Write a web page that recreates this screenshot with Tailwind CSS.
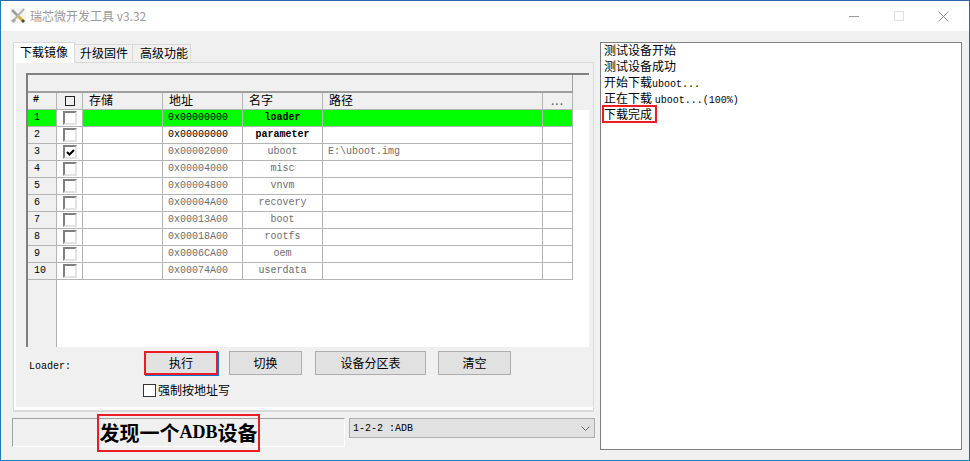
<!DOCTYPE html>
<html lang="zh">

<head>
    <meta charset="UTF-8" />
    <title>瑞芯微开发工具 v3.32</title>
    <script src="https://cdn.jsdelivr.net/npm/@tailwindcss/browser@4"></script>
</head>

<body class="bg-white font-['Liberation_Mono','Noto_Sans_CJK_SC',monospace] text-[12px] text-black">
    <div class="w-[970px] h-[461px] flex flex-col border border-[#1c7cb0] border-t-[#2b67a8] border-r-[#2b67a8] overflow-hidden">
        <!-- title bar -->
        <div class="h-[30px] shrink-0 bg-white flex items-center pl-[9px]">
            <svg width="16" height="16" viewBox="0 0 16 16" class="mr-[4px]">
                <rect x="0" y="0" width="16" height="16" fill="#f4f4f4" />
                <path d="M2 2 L8 8" stroke="#9a9a9a" stroke-width="2.5" />
                <path d="M8 8 L12 12" stroke="#d9b32c" stroke-width="3" />
                <path d="M12 12 L14 14" stroke="#4a4a30" stroke-width="3" />
                <path d="M14 1 L3 13" stroke="#b5b5b5" stroke-width="2" />
                <path d="M1 13 L4 15 L6 12 L3 11 Z" fill="#a8a8a8" />
            </svg>
            <span class="font-['Noto_Sans_CJK_SC',sans-serif] text-[#9a9a9a]">瑞芯微开发工具 v3.32</span>
            <div class="ml-auto flex items-center">
                <div class="w-[45px] flex justify-center"><div class="w-[10px] h-px bg-[#9a9a9a]"></div></div>
                <div class="w-[45px] flex justify-center"><div class="w-[10px] h-[10px] border border-[#e0e0e0]"></div></div>
                <div class="w-[45px] flex justify-center mr-[3px]">
                    <svg width="11" height="11" viewBox="0 0 11 11"><path d="M.5 .5 L10.5 10.5 M10.5 .5 L.5 10.5" stroke="#8a8a8a" /></svg>
                </div>
            </div>
        </div>

        <div class="flex-1 bg-[#f0f0f0] flex pl-[11px] pt-[11px] relative">
            <!-- left side -->
            <div class="w-[583px] shrink-0 flex flex-col">
                <div class="flex h-[20px] pl-[1px] font-['Noto_Sans_CJK_SC',sans-serif]">
                    <div class="w-[62px] h-[21px] bg-white border border-b-0 border-[#d9d9d9] pl-[6px] leading-[18px] relative z-10">下载镜像</div>
                    <div class="w-[58px] mt-[2px] bg-[#f0f0f0] border-t border-r border-[#d9d9d9] pl-[5px] leading-[15px]">升级固件</div>
                    <div class="w-[58px] mt-[2px] bg-[#f0f0f0] border-t border-r border-[#d9d9d9] pl-[7px] leading-[15px]">高级功能</div>
                </div>

                <div class="ml-[1px] w-[581px] h-[350px] border border-[#d9d9d9] border-b-2 bg-[#f0f0f0]">
                    <div class="h-full border-l-2 border-b-[3px] border-white pl-[10px] pt-[10px]">
                        <!-- grid -->
                        <div class="w-[563px] h-[274px] border-t-2 border-l-2 border-[#808080] bg-white flex flex-col">
                            <div class="h-[18px] shrink-0 bg-[#f0f0f0]">
                                <div class="w-[545px] h-full border-r border-b-2 border-[#a0a0a0]"></div>
                            </div>
                            <div class="flex h-[17px] shrink-0 bg-[#f0f0f0] font-['Noto_Sans_CJK_SC',sans-serif] leading-[14px]">
                                <div class="w-[29px] border-r border-b border-[#b4b4b4] pl-[5px] font-['Liberation_Mono'] font-bold text-[10px]">#</div>
                                <div class="w-[26px] border-r border-b border-[#b4b4b4] flex items-center justify-center"><div class="w-[10px] h-[10px] border border-[#222]"></div></div>
                                <div class="w-[80px] border-r border-b border-[#b4b4b4] pl-[6px]">存储</div>
                                <div class="w-[80px] border-r border-b border-[#b4b4b4] pl-[6px]">地址</div>
                                <div class="w-[80px] border-r border-b border-[#b4b4b4] pl-[6px]">名字</div>
                                <div class="w-[220px] border-r border-b border-[#b4b4b4] pl-[6px]">路径</div>
                                <div class="w-[30px] border-r border-b border-[#b4b4b4] text-center text-[#555] tracking-[1px] leading-[14px]">...</div>
                            </div>
                            <div id="rows"></div>
                            <div class="flex-1 w-[29px] bg-[#f0f0f0] border-r border-[#b4b4b4]"></div>
                        </div>

                        <!-- buttons -->
                        <div class="flex items-start mt-[4px] font-['Noto_Sans_CJK_SC',sans-serif] leading-[18px]">
                            <span class="w-[118px] pt-[7px] pl-[3px] font-['Liberation_Mono'] text-[10px]">Loader:</span>
                            <button class="w-[74px] h-[24px] bg-[#e1e1e1] border-2 border-[#ed1c24] shadow-[1px_1px_0_#0078d7]">执行</button>
                            <button class="ml-[11px] w-[73px] h-[24px] bg-[#e1e1e1] border border-[#adadad]">切换</button>
                            <button class="ml-[13px] w-[111px] h-[24px] bg-[#e1e1e1] border border-[#adadad]">设备分区表</button>
                            <button class="ml-[12px] w-[73px] h-[24px] bg-[#e1e1e1] border border-[#adadad]">清空</button>
                        </div>
                        <label class="flex items-center mt-[7px] ml-[117px] font-['Noto_Sans_CJK_SC',sans-serif] leading-[14px]">
                            <span class="w-[13px] h-[13px] border border-[#333] bg-white mr-[2px]"></span>强制按地址写
                        </label>
                    </div>
                </div>

                <!-- status -->
                <div class="flex mt-[6px]">
                    <div class="w-[333px] h-[29px] border border-[#a0a0a0] border-b-white border-r-white"></div>
                    <div class="ml-[4px] w-[246px] h-[20px] bg-[#e1e1e1] border border-[#adadad] flex items-center pl-[3px] text-[10px] font-['Liberation_Mono']">
                        1-2-2 :ADB
                        <svg width="9" height="5" viewBox="0 0 9 5" class="ml-auto mr-[4px]"><path d="M.5 .5 L4.5 4.5 L8.5 .5" fill="none" stroke="#666" /></svg>
                    </div>
                </div>
            </div>

            <!-- log box -->
            <div class="ml-[5px] w-[362px] h-[408px] border border-[#808080] bg-white pl-[3px] font-['Noto_Sans_CJK_SC',sans-serif] leading-[14px]">
                <p class="h-[16px]">测试设备开始</p>
                <p class="h-[16px]">测试设备成功</p>
                <p class="h-[16px]">开始下载<span class="font-['Liberation_Mono'] text-[10px]">uboot...</span></p>
                <p class="h-[16px]">正在下载 <span class="font-['Liberation_Mono'] text-[10px]">uboot...(100%)</span></p>
                <p class="h-[16px] relative w-fit">下载完成<span class="absolute -left-[2px] -right-[5px] -top-[2px] bottom-0 border-2 border-[#ed1c24]"></span></p>
            </div>

            <!-- red note over the status bar -->
            <div class="absolute left-[96px] top-[383px] w-[163px] h-[38px] pb-px border-2 border-[#ed1c24] flex items-center justify-center font-['Noto_Sans_CJK_SC',sans-serif] font-bold text-[20px] whitespace-nowrap">发现一个<span class="font-['Liberation_Serif'] text-[18px]">ADB</span>设备</div>
        </div>
    </div>

    <script>
        const partitions = [
            ["0x00000000", "loader", ""],
            ["0x00000000", "parameter", ""],
            ["0x00002000", "uboot", "E:\\uboot.img"],
            ["0x00004000", "misc", ""],
            ["0x00004800", "vnvm", ""],
            ["0x00004A00", "recovery", ""],
            ["0x00013A00", "boot", ""],
            ["0x00018A00", "rootfs", ""],
            ["0x0006CA00", "oem", ""],
            ["0x00074A00", "userdata", ""],
        ];
        const rows = document.querySelector("#rows");
        partitions.forEach((p, index) => {
            const selected = index == 0;
            const dark = index < 2;
            const rowBg = selected ? "bg-[#00ff00]" : "bg-white";
            const rowText = dark ? "text-black" : "text-[#6d6d6d]";
            const nameText = dark ? "text-black font-bold" : "text-[#6d6d6d]";
            const checked = index == 2;
            rows.innerHTML += `
            <div class="flex h-[17px] text-[10px] leading-[15px]">
                <div class="w-[29px] ${selected ? "bg-[#00ff00]" : "bg-[#f0f0f0]"} border-r border-b border-[#b4b4b4] pl-[6px] text-black">${index + 1}</div>
                <div class="w-[26px] bg-white border-r border-b border-[#b4b4b4] pl-[6px] pt-px">
                    <div class="w-[14px] h-[14px] bg-white border-2 border-t-[#808080] border-l-[#808080] border-r-[#e3e3e3] border-b-[#e3e3e3] flex items-center justify-center">
                        ${checked ? '<svg width="9" height="7" viewBox="0 0 9 7"><path d="M1 3 L3.5 5.5 L8 1" fill="none" stroke="#000" stroke-width="2" /></svg>' : ""}
                    </div>
                </div>
                <div class="w-[80px] ${rowBg} border-r border-b border-[#b4b4b4]"></div>
                <div class="w-[80px] ${rowBg} border-r border-b border-[#b4b4b4] pl-[5px] ${rowText}">${p[0]}</div>
                <div class="w-[80px] ${rowBg} border-r border-b border-[#b4b4b4] text-center ${nameText}">${p[1]}</div>
                <div class="w-[220px] ${rowBg} border-r border-b border-[#b4b4b4] pl-[5px] text-[#6d6d6d]">${p[2]}</div>
                <div class="w-[30px] ${rowBg} border-r border-b border-[#b4b4b4]"></div>
            </div>`;
        });
    </script>
</body>

</html>
